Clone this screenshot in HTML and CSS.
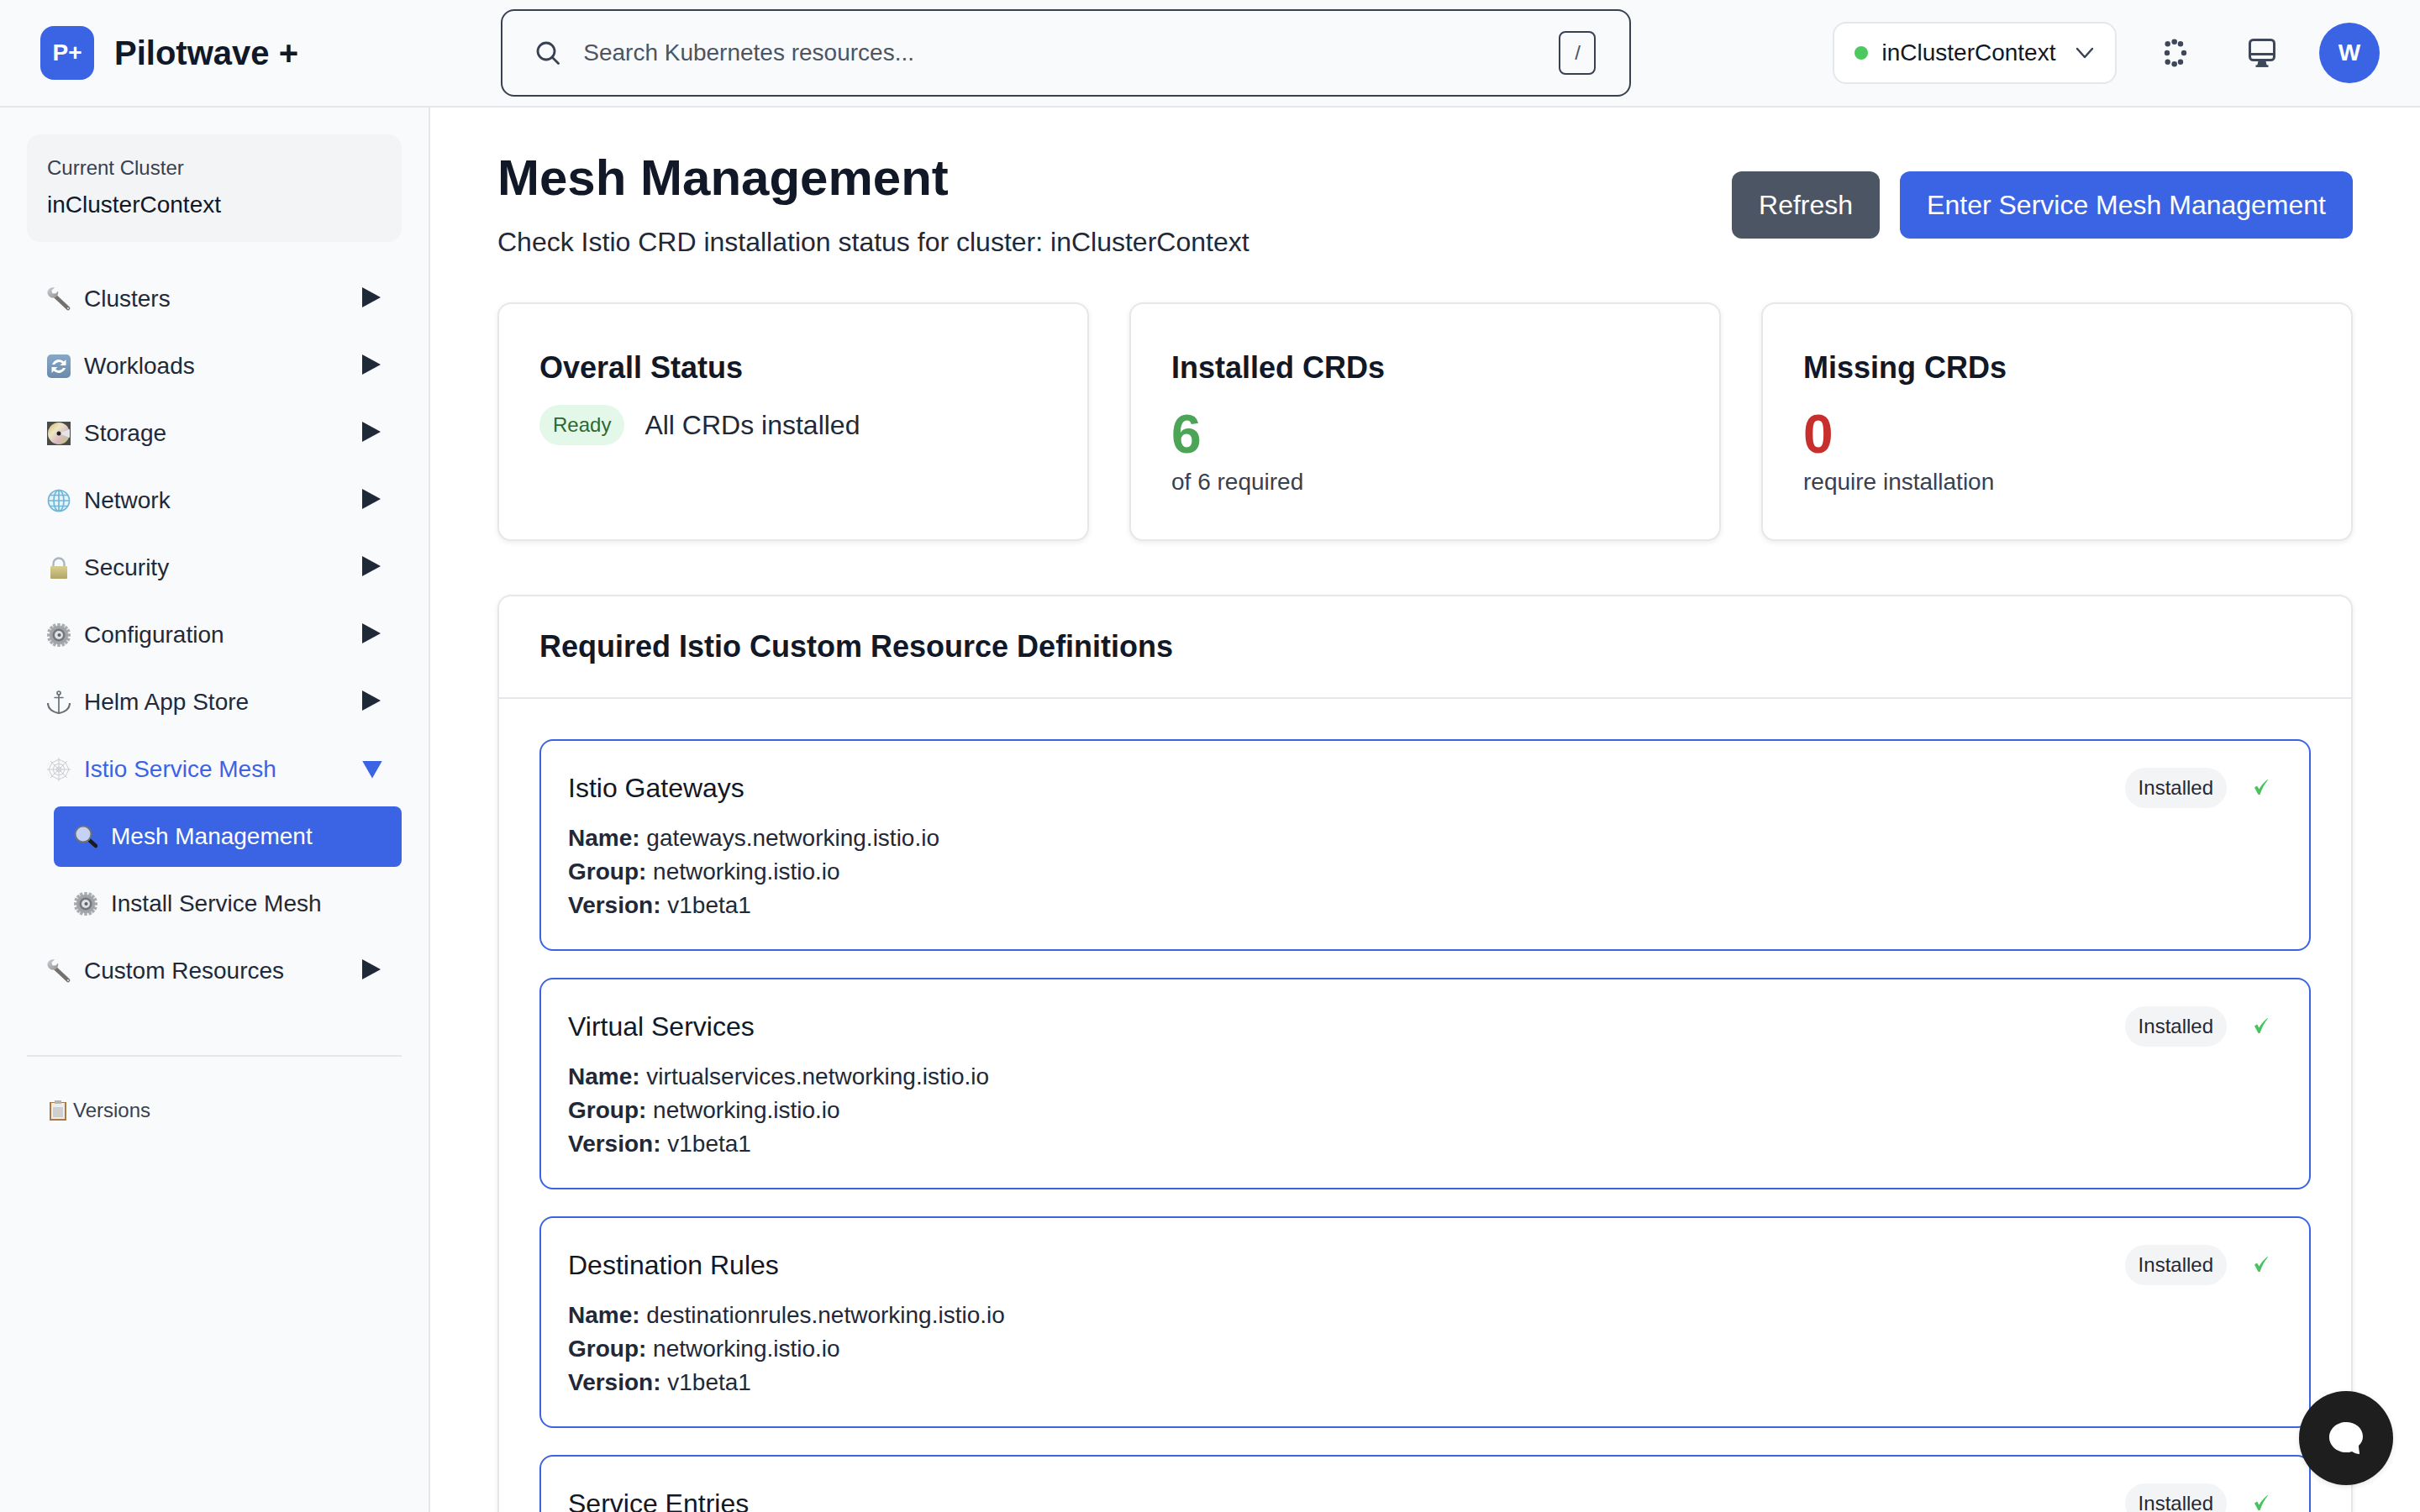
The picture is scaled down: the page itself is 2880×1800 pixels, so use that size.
FILE: index.html
```html
<!DOCTYPE html>
<html>
<head>
    <link rel="stylesheet" href="styles.css">
</head>
<body>
    <svg class="icon-defs" width="0" height="0">
        <defs>
            <linearGradient id="metal" x1="0" y1="0" x2="1" y2="1">
                <stop offset="0" stop-color="#c9ccd1"/>
                <stop offset="1" stop-color="#8f9298"/>
            </linearGradient>
            <linearGradient id="brass" x1="0" y1="0" x2="0" y2="1">
                <stop offset="0" stop-color="#d8cf8e"/>
                <stop offset="1" stop-color="#b0a566"/>
            </linearGradient>
            <linearGradient id="steel" x1="0" y1="0" x2="0" y2="1">
                <stop offset="0" stop-color="#88a8c8"/>
                <stop offset="1" stop-color="#6a8aac"/>
            </linearGradient>
            <linearGradient id="cd" x1="0" y1="0" x2="1" y2="1">
                <stop offset="0" stop-color="#d3b86a"/>
                <stop offset=".35" stop-color="#ece6c4"/>
                <stop offset=".65" stop-color="#d9b9c0"/>
                <stop offset="1" stop-color="#b4c95e"/>
            </linearGradient>
            <symbol id="wrench" viewBox="0 0 28 28">
                <path d="M9 10 L25 25" stroke="#76716f" stroke-width="4.500" stroke-linecap="round"/>
                <path d="M9 .5 L5.500 3.500 L6 7 L9.500 8 L13 4.500 C14 8 12 12 8 12.500 C3 13 0 9 .5 5.500 C1 2 5 -.5 9 .5 Z" fill="url(#metal)"/>
                <circle cx="25" cy="25" r="1" fill="#e8e8e8"/>
            </symbol>
            <symbol id="gear" viewBox="0 0 28 28">
                <g stroke="#a9acb1" stroke-width="3.500" stroke-linecap="butt">
                    <path d="M14 0 V28 M0 14 H28 M4 4 L24 24 M24 4 L4 24 M8 1 L20 27 M20 1 L8 27 M1 8 L27 20 M1 20 L27 8"/>
                </g>
                <circle cx="14" cy="14" r="11" fill="#a0a3a8"/>
                <circle cx="14" cy="14" r="7.500" fill="#74777c"/>
                <circle cx="14" cy="14" r="5" fill="#e0e1e3"/>
                <circle cx="14.500" cy="14" r="2" fill="#5d6064"/>
            </symbol>
        </defs>
    </svg>

    <div class="app">
        <header class="topbar">
            <div class="brand">
                <div class="brand-mark">P+</div>
                <div class="brand-name">Pilotwave +</div>
            </div>
            <div class="search">
                <svg class="search-icon" viewBox="0 0 28 28" fill="none" stroke="#374151" stroke-width="2.800" stroke-linecap="round">
                    <circle cx="12" cy="12" r="10"/>
                    <path d="M19 19 L26.500 26.500"/>
                </svg>
                <span class="search-text">Search Kubernetes resources...</span>
                <span class="search-key">/</span>
            </div>
            <div class="context">
                <span class="context-dot"></span>
                <span class="context-name">inClusterContext</span>
                <svg class="context-chevron" viewBox="0 0 24 24" fill="none" stroke="#374151" stroke-width="2.400" stroke-linecap="round" stroke-linejoin="round">
                    <path d="M3 7 L12 17 L21 7"/>
                </svg>
            </div>
            <svg class="top-icon" viewBox="0 0 34 34" fill="#3f4859">
                <circle cx="15.700" cy="3.700" r="3.300"/><circle cx="23" cy="6.300" r="3.200"/>
                <circle cx="27" cy="17" r="3.200"/><circle cx="23" cy="27.700" r="3.200"/>
                <circle cx="15.700" cy="30.300" r="3.300"/><circle cx="7.700" cy="27.700" r="3.200"/>
                <circle cx="7" cy="17" r="3.200"/><circle cx="7.700" cy="6.300" r="3.200"/>
            </svg>
            <svg class="top-icon" viewBox="-1 0 34 34" fill="none" stroke="#3f4859" stroke-width="3">
                <rect x="1.500" y="1.500" width="29" height="24" rx="4"/>
                <path d="M2 18.500 H30"/>
                <path d="M12.500 26 L11 32 H21 L19.500 26 Z" fill="#3f4859" stroke-width="1.500"/>
                <path d="M8.500 32.700 H23.500" stroke-width="2.500"/>
            </svg>
            <div class="avatar">W</div>
        </header>

        <div class="layout">
            <aside class="sidebar">
                <div class="cluster-box">
                    <div class="cluster-label">Current Cluster</div>
                    <div class="cluster-name">inClusterContext</div>
                </div>
                <nav class="nav">
                    <div class="nav-item">
                        <svg class="nav-icon"><use href="#wrench"/></svg>
                        <span class="nav-text">Clusters</span>
                        <span class="arrow"></span>
                    </div>
                    <div class="nav-item">
                        <svg class="nav-icon" viewBox="0 0 28 28">
                            <rect width="28" height="28" rx="5" fill="url(#steel)"/>
                            <path d="M6 12 A8.500 8.500 0 0 1 20 8.500 L22.500 6 V13 H15.500 L18 10.500 A6 6 0 0 0 9 12 Z" fill="#fff"/>
                            <path d="M22 16 A8.500 8.500 0 0 1 8 19.500 L5.500 22 V15 H12.500 L10 17.500 A6 6 0 0 0 19 16 Z" fill="#fff"/>
                        </svg>
                        <span class="nav-text">Workloads</span>
                        <span class="arrow"></span>
                    </div>
                    <div class="nav-item">
                        <svg class="nav-icon" viewBox="0 0 28 28">
                            <rect width="28" height="28" fill="#4a4a48"/>
                            <circle cx="14" cy="14" r="13" fill="url(#cd)"/>
                            <path d="M14 14 L27 9 V19 Z" fill="#e3e5e6"/>
                            <circle cx="14" cy="14" r="2.500" fill="#222"/>
                        </svg>
                        <span class="nav-text">Storage</span>
                        <span class="arrow"></span>
                    </div>
                    <div class="nav-item">
                        <svg class="nav-icon" viewBox="0 0 28 28" fill="none" stroke="#6fb6d8" stroke-width="1.700">
                            <circle cx="14" cy="14" r="12.500" fill="#e6f3f9"/>
                            <ellipse cx="14" cy="14" rx="6" ry="12.500"/>
                            <path d="M14 1.500 V26.500 M1.500 14 H26.500 M3.500 7.500 H24.500 M3.500 20.500 H24.500"/>
                        </svg>
                        <span class="nav-text">Network</span>
                        <span class="arrow"></span>
                    </div>
                    <div class="nav-item">
                        <svg class="nav-icon" viewBox="0 0 28 28">
                            <path d="M7.500 13 V9 A6.500 6.500 0 0 1 20.500 9 V13" fill="none" stroke="#a9b6c6" stroke-width="2.400"/>
                            <rect x="4" y="12" width="20" height="15" rx="1" fill="url(#brass)"/>
                        </svg>
                        <span class="nav-text">Security</span>
                        <span class="arrow"></span>
                    </div>
                    <div class="nav-item">
                        <svg class="nav-icon"><use href="#gear"/></svg>
                        <span class="nav-text">Configuration</span>
                        <span class="arrow"></span>
                    </div>
                    <div class="nav-item">
                        <svg class="nav-icon" viewBox="0 0 28 28" fill="none" stroke="#6b7078" stroke-width="1.700">
                            <circle cx="14" cy="3" r="2"/>
                            <path d="M14 5 V26 M8.500 8.500 H19.500"/>
                            <path d="M1 15 C1 22 7 26 14 27 C21 26 27 22 27 15" stroke-width="2.200"/>
                        </svg>
                        <span class="nav-text">Helm App Store</span>
                        <span class="arrow"></span>
                    </div>
                    <div class="nav-item nav-open">
                        <svg class="nav-icon" viewBox="0 0 28 28" fill="none" stroke="#c9ccd0" stroke-width="1">
                            <path d="M14 0 V28 M0 14 H28 M4 4 L24 24 M24 4 L4 24"/>
                            <path d="M14 2 L22 6 L26 14 L22 22 L14 26 L6 22 L2 14 L6 6 Z"/>
                            <path d="M14 7 L19 9 L21 14 L19 19 L14 21 L9 19 L7 14 L9 9 Z"/>
                            <path d="M14 11 L16 12 L17 14 L16 16 L14 17 L12 16 L11 14 L12 12 Z"/>
                        </svg>
                        <span class="nav-text">Istio Service Mesh</span>
                        <span class="arrow arrow-down"></span>
                    </div>
                    <div class="nav-item nav-sub nav-active">
                        <svg class="nav-icon" viewBox="0 0 28 28">
                            <path d="M17 17 L26 25" stroke="#1b1b1b" stroke-width="4.500" stroke-linecap="round"/>
                            <circle cx="11" cy="11" r="9.500" fill="#c6d2f4" stroke="#6d7278" stroke-width="2"/>
                        </svg>
                        <span class="nav-text">Mesh Management</span>
                    </div>
                    <div class="nav-item nav-sub">
                        <svg class="nav-icon"><use href="#gear"/></svg>
                        <span class="nav-text">Install Service Mesh</span>
                    </div>
                    <div class="nav-item">
                        <svg class="nav-icon"><use href="#wrench"/></svg>
                        <span class="nav-text">Custom Resources</span>
                        <span class="arrow"></span>
                    </div>
                </nav>
                <div class="sidebar-foot">
                    <svg class="foot-icon" viewBox="0 0 22 24">
                        <rect x="1" y="2" width="20" height="22" fill="#a87b45"/>
                        <rect x="3" y="3" width="16" height="19" fill="#ececec"/>
                        <rect x="5" y="8" width="12" height="12" fill="#cfcfcf"/>
                        <rect x="7" y="0" width="8" height="4" fill="#b5b5b5"/>
                    </svg>
                    <span>Versions</span>
                </div>
            </aside>

            <main class="main">
                <div class="page-head">
                    <div>
                        <h1 class="page-title">Mesh Management</h1>
                        <p class="page-sub">Check Istio CRD installation status for cluster: inClusterContext</p>
                    </div>
                    <div class="page-actions">
                        <button class="btn btn-gray">Refresh</button>
                        <button class="btn btn-blue">Enter Service Mesh Management</button>
                    </div>
                </div>

                <div class="stats">
                    <div class="stat">
                        <h3 class="stat-title">Overall Status</h3>
                        <div class="stat-status">
                            <span class="badge-ready">Ready</span>
                            <span class="stat-message">All CRDs installed</span>
                        </div>
                    </div>
                    <div class="stat">
                        <h3 class="stat-title">Installed CRDs</h3>
                        <div class="stat-number green">6</div>
                        <div class="stat-note">of 6 required</div>
                    </div>
                    <div class="stat">
                        <h3 class="stat-title">Missing CRDs</h3>
                        <div class="stat-number red">0</div>
                        <div class="stat-note">require installation</div>
                    </div>
                </div>

                <section class="panel">
                    <h2 class="panel-title">Required Istio Custom Resource Definitions</h2>
                    <div class="panel-body">
                        <div class="crd">
                            <div class="crd-head">
                                <span class="crd-name">Istio Gateways</span>
                                <div class="crd-status">
                                    <span class="pill">Installed</span>
                                    <svg class="check" viewBox="0 0 16 18"><path d="M0 9.500 L3 7.500 L5.500 11.500 C8 7 11.500 3 15.500 0 L16 .5 C12 5 9 11 6.500 18 L4.500 18 Z" fill="#48c45f"/></svg>
                                </div>
                            </div>
                            <div class="crd-row"><b>Name:</b> gateways.networking.istio.io</div>
                            <div class="crd-row"><b>Group:</b> networking.istio.io</div>
                            <div class="crd-row"><b>Version:</b> v1beta1</div>
                        </div>
                        <div class="crd">
                            <div class="crd-head">
                                <span class="crd-name">Virtual Services</span>
                                <div class="crd-status">
                                    <span class="pill">Installed</span>
                                    <svg class="check" viewBox="0 0 16 18"><path d="M0 9.500 L3 7.500 L5.500 11.500 C8 7 11.500 3 15.500 0 L16 .5 C12 5 9 11 6.500 18 L4.500 18 Z" fill="#48c45f"/></svg>
                                </div>
                            </div>
                            <div class="crd-row"><b>Name:</b> virtualservices.networking.istio.io</div>
                            <div class="crd-row"><b>Group:</b> networking.istio.io</div>
                            <div class="crd-row"><b>Version:</b> v1beta1</div>
                        </div>
                        <div class="crd">
                            <div class="crd-head">
                                <span class="crd-name">Destination Rules</span>
                                <div class="crd-status">
                                    <span class="pill">Installed</span>
                                    <svg class="check" viewBox="0 0 16 18"><path d="M0 9.500 L3 7.500 L5.500 11.500 C8 7 11.500 3 15.500 0 L16 .5 C12 5 9 11 6.500 18 L4.500 18 Z" fill="#48c45f"/></svg>
                                </div>
                            </div>
                            <div class="crd-row"><b>Name:</b> destinationrules.networking.istio.io</div>
                            <div class="crd-row"><b>Group:</b> networking.istio.io</div>
                            <div class="crd-row"><b>Version:</b> v1beta1</div>
                        </div>
                        <div class="crd">
                            <div class="crd-head">
                                <span class="crd-name">Service Entries</span>
                                <div class="crd-status">
                                    <span class="pill">Installed</span>
                                    <svg class="check" viewBox="0 0 16 18"><path d="M0 9.500 L3 7.500 L5.500 11.500 C8 7 11.500 3 15.500 0 L16 .5 C12 5 9 11 6.500 18 L4.500 18 Z" fill="#48c45f"/></svg>
                                </div>
                            </div>
                        </div>
                    </div>
                </section>
            </main>
        </div>
    </div>

    <div class="chat-button">
        <svg viewBox="0 0 40 38" width="40" height="38">
            <path d="M20 0 C31 0 40 7 40 17 C40 22 38 25 35 28 C35 32 36 35 36 38 C33 38 30 37 27 35 C25 36 22 36 20 36 C9 36 0 28 0 18 C0 8 9 0 20 0 Z" fill="#fff"/>
        </svg>
    </div>
</body>
</html>
```
FILE: styles.css
```css
* {
    box-sizing: border-box;
}
html, body {
    height: 100%;
}
body {
    margin: 0;
    font-family: "Liberation Sans", Arial, sans-serif;
    color: #111827;
    background-color: #fff;
    overflow: hidden;
}
.icon-defs {
    display: block;
    width: 0;
    height: 0;
}
.app {
    display: flex;
    flex-direction: column;
    height: 100vh;
}

/* Top bar */
.topbar {
    display: flex;
    align-items: center;
    flex-shrink: 0;
    height: 128px;
    padding: 0 48px;
    background-color: #f9fafb;
    border-bottom: 2px solid #e5e7eb;
}
.brand {
    display: flex;
    align-items: center;
    gap: 24px;
    width: 549px;
}
.brand-mark {
    display: flex;
    align-items: center;
    justify-content: center;
    width: 64px;
    height: 64px;
    border-radius: 16px;
    background-color: #3b64e4;
    color: #fff;
    font-size: 28px;
    font-weight: bold;
}
.brand-name {
    font-size: 40px;
    font-weight: bold;
}
.search {
    display: flex;
    align-items: center;
    width: 1347px;
    height: 104px;
    padding: 0 40px;
    border: 2px solid #374151;
    border-radius: 16px;
    background-color: #f9fafb;
}
.search-icon {
    width: 28px;
    height: 28px;
    margin-right: 28px;
}
.search-text {
    flex: 1;
    font-size: 28px;
    color: #4b5563;
}
.search-key {
    display: flex;
    align-items: center;
    justify-content: center;
    width: 44px;
    height: 52px;
    border: 2px solid #374151;
    border-radius: 8px;
    font-size: 24px;
    color: #4b5563;
}
.context {
    display: flex;
    align-items: center;
    width: 338px;
    height: 74px;
    margin-left: 240px;
    padding: 0 24px;
    border: 2px solid #e5e7eb;
    border-radius: 16px;
    background-color: #fff;
    font-size: 28px;
}
.context-dot {
    width: 16px;
    height: 16px;
    margin-right: 16px;
    border-radius: 50%;
    background-color: #4cc95f;
}
.context-name {
    flex: 1;
}
.context-chevron {
    width: 24px;
    height: 24px;
}
.top-icon {
    flex-shrink: 0;
    width: 34px;
    height: 34px;
    margin-left: 53px;
}
.top-icon + .top-icon {
    margin-left: 69px;
}
.avatar {
    display: flex;
    align-items: center;
    justify-content: center;
    width: 72px;
    height: 72px;
    margin-left: 51px;
    border-radius: 50%;
    background-color: #3b64e4;
    color: #fff;
    font-size: 28px;
    font-weight: bold;
}

.layout {
    display: flex;
    flex: 1;
    min-height: 0;
}

/* Sidebar */
.sidebar {
    flex-shrink: 0;
    width: 512px;
    padding: 32px;
    background-color: #f9fafb;
    border-right: 2px solid #e5e7eb;
}
.cluster-box {
    height: 128px;
    padding: 24px;
    border-radius: 16px;
    background-color: #f3f4f6;
}
.cluster-label {
    font-size: 24px;
    line-height: 32px;
    color: #374151;
}
.cluster-name {
    margin-top: 8px;
    font-size: 28px;
    line-height: 40px;
}
.nav {
    display: flex;
    flex-direction: column;
    gap: 8px;
    margin-top: 32px;
}
.nav-item {
    display: flex;
    align-items: center;
    height: 72px;
    padding: 0 24px;
    border-radius: 8px;
    font-size: 28px;
    color: #1f2937;
}
.nav-icon {
    flex-shrink: 0;
    width: 28px;
    height: 28px;
    margin-right: 16px;
}
.nav-text {
    flex: 1;
}
.arrow {
    width: 22px;
    height: 24px;
    margin-top: -4px;
    margin-right: 1px;
    background-color: #1f2937;
    clip-path: polygon(0 0, 100% 50%, 0 100%);
}
.arrow-down {
    width: 24px;
    height: 21px;
    margin-top: 0;
    margin-right: -1px;
    background-color: #3b64e4;
    clip-path: polygon(0 0, 100% 0, 50% 100%);
}
.nav-open {
    color: #3b64e4;
}
.nav-sub {
    margin-left: 32px;
}
.nav-active {
    background-color: #3b64e4;
    color: #fff;
}
.sidebar-foot {
    display: flex;
    align-items: center;
    margin-top: 64px;
    padding: 50px 26px 0;
    border-top: 2px solid #e5e7eb;
    font-size: 24px;
    color: #374151;
}
.foot-icon {
    width: 22px;
    height: 24px;
    margin-right: 7px;
}

/* Main */
.main {
    flex: 1;
    min-width: 0;
    padding: 48px 80px 0;
    overflow: hidden;
}
.page-head {
    display: flex;
    align-items: center;
    justify-content: space-between;
}
.page-title {
    margin: 0;
    font-size: 60px;
    line-height: 72px;
    font-weight: bold;
}
.page-sub {
    margin: 16px 0 0;
    font-size: 32px;
    line-height: 48px;
    color: #1f2937;
}
.page-actions {
    display: flex;
    gap: 24px;
}
.btn {
    height: 80px;
    padding: 0 32px;
    border: none;
    border-radius: 12px;
    font-family: "Liberation Sans", Arial, sans-serif;
    font-size: 32px;
    color: #fff;
}
.btn-gray {
    background-color: #4b5563;
}
.btn-blue {
    background-color: #3b64e4;
}

.stats {
    display: grid;
    grid-template-columns: repeat(3, 1fr);
    gap: 48px;
    margin-top: 48px;
}
.stat {
    height: 284px;
    padding: 48px;
    background-color: #fff;
    border: 2px solid #e5e7eb;
    border-radius: 16px;
    box-shadow: 0 2px 6px rgba(0, 0, 0, 0.08);
}
.stat-title {
    margin: 0;
    font-size: 36px;
    line-height: 56px;
    font-weight: bold;
}
.stat-status {
    display: flex;
    align-items: center;
    gap: 24px;
    margin-top: 16px;
}
.badge-ready {
    padding: 0 16px;
    height: 48px;
    line-height: 48px;
    border-radius: 24px;
    background-color: #e3f8e8;
    color: #2b6a30;
    font-size: 24px;
}
.stat-message {
    font-size: 32px;
    color: #1f2937;
}
.stat-number {
    margin-top: 19px;
    font-size: 64px;
    line-height: 64px;
    font-weight: bold;
}
.green {
    color: #4ca557;
}
.red {
    color: #c62f2b;
}
.stat-note {
    margin-top: 5px;
    font-size: 28px;
    line-height: 40px;
    color: #374151;
}

.panel {
    margin-top: 64px;
    background-color: #fff;
    border: 2px solid #e5e7eb;
    border-radius: 16px;
    box-shadow: 0 2px 6px rgba(0, 0, 0, 0.08);
}
.panel-title {
    margin: 0;
    padding: 32px 48px;
    font-size: 36px;
    line-height: 56px;
    font-weight: bold;
    border-bottom: 2px solid #e5e7eb;
}
.panel-body {
    display: flex;
    flex-direction: column;
    gap: 32px;
    padding: 48px;
}
.crd {
    padding: 32px;
    border: 2px solid #3b64e4;
    border-radius: 16px;
    background-color: #fff;
}
.crd-head {
    display: flex;
    align-items: center;
    justify-content: space-between;
    margin-bottom: 16px;
}
.crd-name {
    font-size: 32px;
    color: #111827;
}
.crd-status {
    display: flex;
    align-items: center;
    gap: 33px;
    padding-right: 17px;
}
.pill {
    height: 48px;
    padding: 0 16px;
    line-height: 48px;
    border-radius: 24px;
    background-color: #f3f4f6;
    color: #1f2937;
    font-size: 24px;
}
.check {
    width: 16px;
    height: 18px;
    margin-top: -3px;
}
.crd-row {
    font-size: 28px;
    line-height: 40px;
    color: #1f2937;
}

.chat-button {
    position: fixed;
    right: 32px;
    bottom: 32px;
    display: flex;
    align-items: center;
    justify-content: center;
    width: 112px;
    height: 112px;
    border-radius: 50%;
    background-color: #1e1e1e;
    box-shadow: 0 2px 6px rgba(0, 0, 0, 0.1);
}
```
